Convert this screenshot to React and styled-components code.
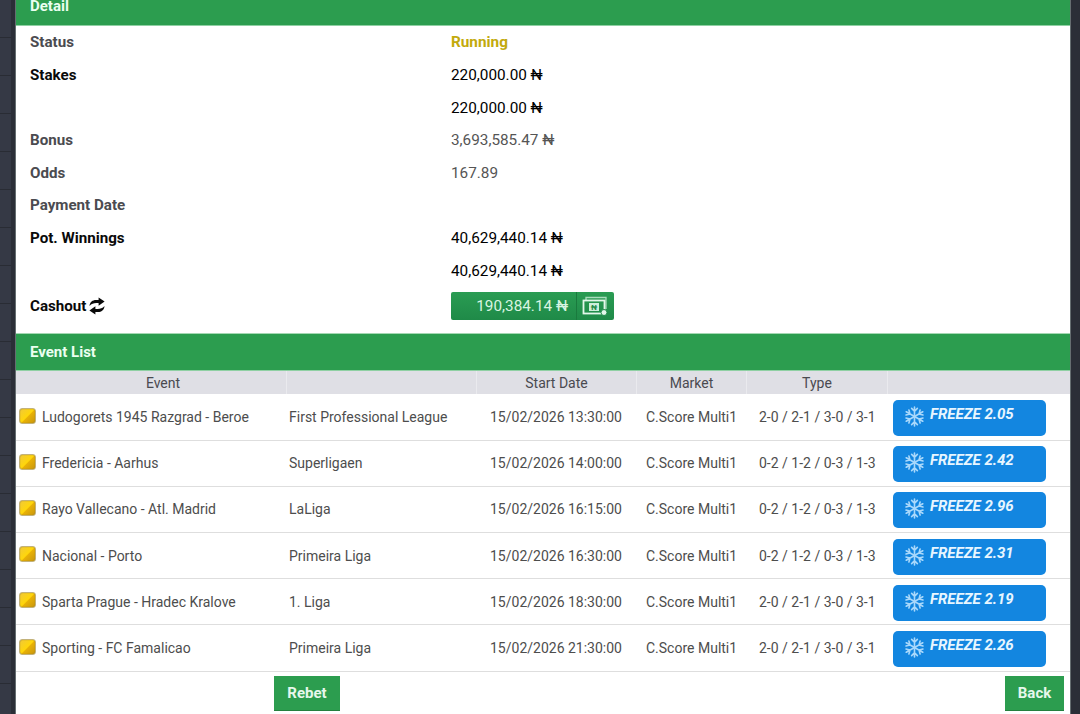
import React from 'react';
import styled, { createGlobalStyle } from 'styled-components';

const GlobalStyle = createGlobalStyle`
  html, body {
    margin: 0;
    padding: 0;
    height: 714px;
    overflow: hidden;
  }

  body {
    font-family: Roboto, "Liberation Sans", sans-serif;
    background-color: #2b2e37;
    background-image:
      repeating-linear-gradient(to bottom, #353945 0, #353945 37px, #292c34 37px, #292c34 38px);
    background-size: 11px 100%;
    background-repeat: no-repeat;
  }
`;

const Modal = styled.div`
  width: 1054px;
  height: 726px;
  margin: -12px 0 0 16px;
  background: #fff;
  box-shadow: 0 0 0 1px rgba(210, 225, 220, 0.35);
  overflow: hidden;
`;

const SectionTitle = styled.div`
  height: 38px;
  padding: 0 14px 1px;
  display: flex;
  align-items: center;
  background: #2c9d4f;
  border-top: 1px solid #a5d8b3;
  border-bottom: 1px solid #8fd0a3;
  box-sizing: border-box;
  color: #eafff0;
  font-size: 15px;
  font-weight: 700;
`;

const DetailTitle = styled(SectionTitle)`
  border-top: 0;
`;

const DetailRow = styled.div`
  display: grid;
  grid-template-columns: 421px 1fr;
  align-items: center;
  height: 32.62px;
  padding-left: 14px;
  font-size: 15.15px;
  color: ${props => (props.$dark ? '#000' : '#555')};
`;

const CashoutRow = styled(DetailRow)`
  height: 39px;
  margin-bottom: 7.6px;
`;

const Label = styled.div`
  display: flex;
  align-items: center;
  gap: 3px;
  font-weight: 700;
  color: ${props => (props.$dark ? '#0a0a0a' : '#4b4b50')};
`;

const Value = styled.div`
  font-size: 15.3px;
  font-weight: ${props => (props.$strong ? 700 : 400)};
  color: ${props => props.$color || 'inherit'};
`;

const CashoutButton = styled.div`
  display: flex;
  width: 163px;
  height: 28px;
  border-radius: 2px;
  overflow: hidden;
  background: linear-gradient(to bottom, #2a9c53, #1f8a48);
  color: #d9f5e2;
  font-size: 15.3px;
`;

const CashoutAmount = styled.div`
  flex: 1;
  display: flex;
  align-items: center;
  justify-content: flex-end;
  padding-right: 8px;
`;

const CashoutIcon = styled.div`
  width: 38px;
  display: flex;
  align-items: center;
  justify-content: center;
  border-left: 1px solid #1a7a3e;
  box-sizing: border-box;
`;

const EventHead = styled.div`
  display: grid;
  grid-template-columns: 271px 190px 160px 110px 141px 1fr;
  height: 23px;
  background: #dfdfe5;
  color: #4a4a50;
  font-size: 14px;
`;

const HeadCell = styled.div`
  display: flex;
  align-items: center;
  justify-content: center;
  padding-left: ${props => props.$indent || 0}px;
  border-right: 1px solid #eaeaee;

  &:last-child {
    border-right: 0;
  }
`;

const EventRow = styled.div`
  display: grid;
  grid-template-columns: 271px 190px 160px 110px 141px 1fr;
  align-items: center;
  height: 46.2px;
  box-sizing: border-box;
  border-bottom: 1px solid #dedede;
  color: #4d4d4d;
  font-size: 14px;
`;

const EventName = styled.div`
  display: flex;
  align-items: center;
  gap: 6px;
  padding-left: 3px;
  white-space: nowrap;
`;

const Badge = styled.span`
  width: 17px;
  height: 16px;
  border-radius: 3px;
  box-sizing: border-box;
  border: 1px solid #c3b27a;
  background: linear-gradient(135deg, #f0c93a 0%, #ffd60a 50%, #e8b106 55%, #c9970f 100%);
  box-shadow: inset 0 0 1px #8a6d14;
  margin-top: -3px;
`;

const League = styled.div`
  padding-left: 2px;
`;

const StartDate = styled.div`
  padding-left: 13px;
`;

const Market = styled.div`
  padding-left: 9px;
`;

const Kind = styled.div`
  padding-left: 12px;
  white-space: nowrap;
`;

const FreezeCell = styled.div`
  padding-left: 5px;
`;

const FreezeButton = styled.div`
  display: flex;
  align-items: flex-start;
  gap: 5px;
  width: 153px;
  height: 36px;
  padding: 5px 0 0 11px;
  margin-top: 2px;
  box-sizing: border-box;
  border-radius: 5px;
  background: #1386e0;
  color: #e8f6ff;
  font-size: 15px;
  font-weight: 700;
  font-style: italic;

  svg {
    flex: none;
    margin-top: 1px;
  }
`;

const Footer = styled.div`
  display: flex;
  justify-content: space-between;
  padding: 4px 6px 0 258px;
`;

const ActionButton = styled.div`
  display: flex;
  align-items: center;
  justify-content: center;
  width: ${props => props.$width}px;
  height: 35px;
  background: #2c9d4f;
  border-bottom: 1px solid #24803f;
  box-sizing: border-box;
  color: #e6f7eb;
  font-size: 15px;
  font-weight: 700;
`;

const CashIcon = () => (
  <svg width="27" height="22" viewBox="0 0 27 22" fill="none">
    <path d="M4 5V2.5h20V14" stroke="#a9dcbc" strokeWidth="1.3" />
    <rect x="1.5" y="5.5" width="21" height="13" stroke="#e3f7ea" strokeWidth="1.8" />
    <rect x="7" y="8" width="10" height="8" fill="#cdeeda" />
    <text x="12" y="15" textAnchor="middle" fontSize="8" fontWeight="700" fill="#1f8a48">₦</text>
    <circle cx="22" cy="17.5" r="3" fill="#e3f7ea" stroke="#1f8a48" />
  </svg>
);

const RefreshIcon = () => (
  <svg width="16" height="18" viewBox="0 0 16 18" fill="#0a0a0a">
    <path d="M.5 9C.8 5 3.6 3 7 3h2.600V.4L15.600 4.600 9.600 8.800V6H7.400C4.600 6 2.400 6.800.5 9z" />
    <path d="M15.500 9c-.3 4-3.100 6-6.500 6H6.400v2.600L.4 13.400l6-4.200V12h2.200c2.800 0 5-.8 6.900-3z" />
  </svg>
);

const Snowflake = () => (
  <svg width="21" height="21" viewBox="-11 -11 22 22" stroke="#a9d8fb" strokeWidth="1.7" fill="none" strokeLinecap="round">
    {[0, 60, 120, 180, 240, 300].map(angle => (
      <path key={angle} transform={`rotate(${angle})`} d="M0 0V-10M-3 -8.500L0 -5.500L3 -8.500" />
    ))}
  </svg>
);

const EVENTS = [
  { name: 'Ludogorets 1945 Razgrad - Beroe', league: 'First Professional League', date: '15/02/2026 13:30:00', type: '2-0 / 2-1 / 3-0 / 3-1', odd: '2.05' },
  { name: 'Fredericia - Aarhus', league: 'Superligaen', date: '15/02/2026 14:00:00', type: '0-2 / 1-2 / 0-3 / 1-3', odd: '2.42' },
  { name: 'Rayo Vallecano - Atl. Madrid', league: 'LaLiga', date: '15/02/2026 16:15:00', type: '0-2 / 1-2 / 0-3 / 1-3', odd: '2.96' },
  { name: 'Nacional - Porto', league: 'Primeira Liga', date: '15/02/2026 16:30:00', type: '0-2 / 1-2 / 0-3 / 1-3', odd: '2.31' },
  { name: 'Sparta Prague - Hradec Kralove', league: '1. Liga', date: '15/02/2026 18:30:00', type: '2-0 / 2-1 / 3-0 / 3-1', odd: '2.19' },
  { name: 'Sporting - FC Famalicao', league: 'Primeira Liga', date: '15/02/2026 21:30:00', type: '2-0 / 2-1 / 3-0 / 3-1', odd: '2.26' },
];

const App = () => (
  <Modal>
    <GlobalStyle />
    <DetailTitle>Detail</DetailTitle>
    <div>
      <DetailRow>
        <Label>Status</Label>
        <Value $strong $color="#c2aa0c">Running</Value>
      </DetailRow>
      <DetailRow $dark>
        <Label $dark>Stakes</Label>
        <Value>220,000.00 ₦</Value>
      </DetailRow>
      <DetailRow $dark>
        <span />
        <Value>220,000.00 ₦</Value>
      </DetailRow>
      <DetailRow>
        <Label>Bonus</Label>
        <Value>3,693,585.47 ₦</Value>
      </DetailRow>
      <DetailRow>
        <Label>Odds</Label>
        <Value>167.89</Value>
      </DetailRow>
      <DetailRow>
        <Label>Payment Date</Label>
        <span />
      </DetailRow>
      <DetailRow $dark>
        <Label $dark>Pot. Winnings</Label>
        <Value>40,629,440.14 ₦</Value>
      </DetailRow>
      <DetailRow $dark>
        <span />
        <Value>40,629,440.14 ₦</Value>
      </DetailRow>
      <CashoutRow $dark>
        <Label $dark>Cashout<RefreshIcon /></Label>
        <CashoutButton>
          <CashoutAmount>190,384.14 ₦</CashoutAmount>
          <CashoutIcon><CashIcon /></CashoutIcon>
        </CashoutButton>
      </CashoutRow>
    </div>
    <SectionTitle>Event List</SectionTitle>
    <div>
      <EventHead>
        <HeadCell $indent={24}>Event</HeadCell>
        <HeadCell />
        <HeadCell>Start Date</HeadCell>
        <HeadCell>Market</HeadCell>
        <HeadCell>Type</HeadCell>
        <HeadCell />
      </EventHead>
      {EVENTS.map(event => (
        <EventRow key={event.name}>
          <EventName><Badge />{event.name}</EventName>
          <League>{event.league}</League>
          <StartDate>{event.date}</StartDate>
          <Market>C.Score Multi1</Market>
          <Kind>{event.type}</Kind>
          <FreezeCell>
            <FreezeButton><Snowflake />FREEZE {event.odd}</FreezeButton>
          </FreezeCell>
        </EventRow>
      ))}
    </div>
    <Footer>
      <ActionButton $width={66}>Rebet</ActionButton>
      <ActionButton $width={59}>Back</ActionButton>
    </Footer>
  </Modal>
);

export default App;
